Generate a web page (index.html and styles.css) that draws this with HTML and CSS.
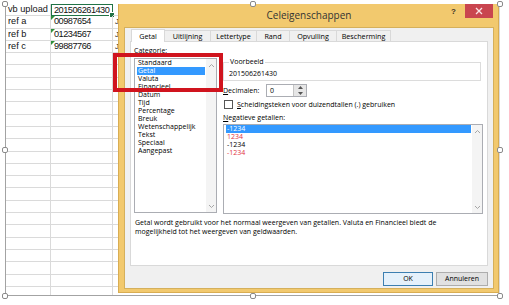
FILE: index.html
```html
<!DOCTYPE html>
<html lang="nl">
<head>
<meta charset="utf-8">
<title>Celeigenschappen</title>
<link rel="stylesheet" href="styles.css">
</head>
<body>
<div class="shot">
  <div class="sheet">
    <div class="c a">vb upload</div><div class="c b num sel">201506261430<span class="fill"></span></div><div class="c x"></div>
    <div class="c a">ref a</div><div class="c b num"><i class="tri"></i>00987654</div><div class="c x">J</div>
    <div class="c a">ref b</div><div class="c b num"><i class="tri"></i>01234567</div><div class="c x">J</div>
    <div class="c a">ref c</div><div class="c b num"><i class="tri"></i>99887766</div><div class="c x">J</div>
    <div class="c a"></div><div class="c b"></div><div class="c x"></div>
    <div class="c a"></div><div class="c b"></div><div class="c x"></div>
    <div class="c a"></div><div class="c b"></div><div class="c x"></div>
    <div class="c a"></div><div class="c b"></div><div class="c x"></div>
    <div class="c a"></div><div class="c b"></div><div class="c x"></div>
    <div class="c a"></div><div class="c b"></div><div class="c x"></div>
    <div class="c a"></div><div class="c b"></div><div class="c x"></div>
    <div class="c a"></div><div class="c b"></div><div class="c x"></div>
    <div class="c a"></div><div class="c b"></div><div class="c x"></div>
    <div class="c a"></div><div class="c b"></div><div class="c x"></div>
    <div class="c a"></div><div class="c b"></div><div class="c x"></div>
    <div class="c a"></div><div class="c b"></div><div class="c x"></div>
    <div class="c a"></div><div class="c b"></div><div class="c x"></div>
    <div class="c a"></div><div class="c b"></div><div class="c x"></div>
    <div class="c a"></div><div class="c b"></div><div class="c x"></div>
    <div class="c a"></div><div class="c b"></div><div class="c x"></div>
    <div class="c a"></div><div class="c b"></div><div class="c x"></div>
    <div class="c a"></div><div class="c b"></div><div class="c x"></div>
    <div class="c a"></div><div class="c b"></div><div class="c x"></div>
    <div class="c a"></div><div class="c b"></div><div class="c x"></div>
  </div>

  <div class="dlg">
    <div class="titlebar">
      <span></span>
      <span class="title">Celeigenschappen</span>
      <span class="ctrls">
        <span class="help">?</span>
        <span class="close"><svg width="8" height="8" viewBox="0 0 8 8"><path d="M1 1 L7 7 M7 1 L1 7" stroke="#fbe4e6" stroke-width="1.3"/></svg></span>
      </span>
    </div>
    <div class="body">
      <div class="tabs">
        <span class="tab on w34">Getal</span>
        <span class="tab w46">Uitlijning</span>
        <span class="tab w46">Lettertype</span>
        <span class="tab w33">Rand</span>
        <span class="tab w47">Opvulling</span>
        <span class="tab w54">Bescherming</span>
      </div>
      <div class="panel">
        <div class="cols">
          <div class="leftcol">
            <div class="lbl"><u>C</u>ategorie:</div>
            <div class="listbox cat">
              <div class="items">
                <div class="it">Standaard</div>
                <div class="it on">Getal</div>
                <div class="it">Valuta</div>
                <div class="it">Financieel</div>
                <div class="it">Datum</div>
                <div class="it">Tijd</div>
                <div class="it">Percentage</div>
                <div class="it">Breuk</div>
                <div class="it">Wetenschappelijk</div>
                <div class="it">Tekst</div>
                <div class="it">Speciaal</div>
                <div class="it">Aangepast</div>
              </div>
              <div class="sbar">
                <svg width="7" height="5" viewBox="0 0 7 5"><path d="M1 4 L3.5 1.5 L6 4" fill="none" stroke="#a6a6a6" stroke-width="1"/></svg>
                <svg width="7" height="5" viewBox="0 0 7 5"><path d="M1 1 L3.5 3.5 L6 1" fill="none" stroke="#a6a6a6" stroke-width="1"/></svg>
              </div>
            </div>
          </div>
          <div class="rightcol">
            <fieldset class="group">
              <legend>Voorbeeld</legend>
              <div class="sample">201506261430</div>
            </fieldset>
            <div class="decrow">
              <span class="lbl"><u>D</u>ecimalen:</span>
              <span class="spin">
                <span class="spinval">0</span>
                <span class="spinbtns">
                  <svg width="5" height="3" viewBox="0 0 5 3"><path d="M0 3 L2.5 0 L5 3Z" fill="#555"/></svg>
                  <svg width="5" height="3" viewBox="0 0 5 3"><path d="M0 0 L2.5 3 L5 0Z" fill="#555"/></svg>
                </span>
              </span>
            </div>
            <div class="chkrow">
              <span class="chk"></span>
              <span class="lbl"><u>S</u>cheidingsteken voor duizendtallen (.) gebruiken</span>
            </div>
            <div class="lbl neglbl"><u>N</u>egatieve getallen:</div>
            <div class="listbox neg">
              <div class="items">
                <div class="it on">-1234</div>
                <div class="it red">1234</div>
                <div class="it">-1234</div>
                <div class="it red">-1234</div>
              </div>
              <div class="sbar">
                <svg width="7" height="5" viewBox="0 0 7 5"><path d="M1 4 L3.5 1.5 L6 4" fill="none" stroke="#a6a6a6" stroke-width="1"/></svg>
                <svg width="7" height="5" viewBox="0 0 7 5"><path d="M1 1 L3.5 3.5 L6 1" fill="none" stroke="#a6a6a6" stroke-width="1"/></svg>
              </div>
            </div>
          </div>
        </div>
        <p class="desc">Getal wordt gebruikt voor het normaal weergeven van getallen. Valuta en Financieel biedt de mogelijkheid tot het weergeven van geldwaarden.</p>
      </div>
      <div class="footer">
        <span class="btn ok">OK</span>
        <span class="btn">Annuleren</span>
      </div>
    </div>
  </div>

  <div class="redbox"></div>
</div>

<span class="handle h1"></span>
<span class="handle h2"></span>
<span class="handle h3"></span>
<span class="handle h4"></span>
<span class="handle h5"></span>
<span class="handle h6"></span>
<span class="handle h7"></span>
<span class="handle h8"></span>
</body>
</html>
```

FILE: styles.css
```css
html, body {
  margin: 0;
  padding: 0;
}
body {
  width: 509px;
  height: 305px;
  background: #ffffff;
  position: relative;
  overflow: hidden;
  font-family: "Open Sans", "Noto Sans", sans-serif;
}

.shot {
  position: relative;
  margin: 4px 0 0 5px;
  width: 495px;
  height: 292px;
  box-sizing: border-box;
  border-left: 1px solid #a3a3a3;
  border-bottom: 1px solid #a3a3a3;
  overflow: hidden;
}

/* spreadsheet */
.sheet {
  display: grid;
  grid-template-columns: 45px 62px 1fr;
  grid-auto-rows: 12.3px;
  font-family: "Liberation Sans", Arial, sans-serif;
  font-size: 9.2px;
  color: #111;
}
.c {
  box-sizing: border-box;
  border-right: 1px solid #dadada;
  border-bottom: 1px solid #dadada;
  line-height: 11px;
  white-space: nowrap;
  overflow: hidden;
  position: relative;
}
.a { padding-left: 2px; }
.b { padding-left: 3px; }
.x { padding-left: 2px; font-size: 8px; }
.num { letter-spacing: -0.5px; }
.sel {
  border: 1px solid #217346;
  padding-left: 2px;
  overflow: visible;
}
.fill {
  position: absolute;
  right: -3px;
  bottom: -3px;
  width: 4px;
  height: 4px;
  background: #217346;
  border: 1px solid #fff;
}
.tri {
  position: absolute;
  left: 0;
  top: 0;
  width: 0;
  height: 0;
  border-top: 4px solid #2f8f3a;
  border-right: 4px solid transparent;
}

/* dialog */
.dlg {
  position: absolute;
  left: 112px;
  top: -1px;
  width: 381px;
  height: 290px;
  box-sizing: border-box;
  background: #f2c96e;
  border: 1px solid #d9ad52;
  padding: 0 4px 3px 5px;
  display: flex;
  flex-direction: column;
}
.titlebar {
  height: 23px;
  display: grid;
  grid-template-columns: 1fr auto 1fr;
  align-items: start;
}
.title {
  font-size: 10px;
  color: #333;
  line-height: 12px;
  margin-top: 5px;
}
.ctrls {
  justify-self: end;
  display: flex;
  align-items: flex-start;
}
.help {
  font-family: "Liberation Sans", Arial, sans-serif;
  font-weight: bold;
  font-size: 8px;
  color: #3b3325;
  line-height: 10px;
  margin-top: 3px;
  margin-right: 9px;
}
.close {
  width: 28px;
  height: 14px;
  background: #c9454f;
  display: flex;
  align-items: center;
  justify-content: center;
  margin-right: 1px;
}

.body {
  flex: 1;
  background: #f0f0f0;
  border: 1px solid #d5b05c;
  padding: 1px 5px 0 5px;
  display: flex;
  flex-direction: column;
  font-size: 7px;
  color: #000;
}
.tabs {
  display: flex;
  height: 12px;
  padding-left: 1px;
  align-items: flex-end;
}
.tab {
  box-sizing: border-box;
  height: 11px;
  border: 1px solid #d9d9d9;
  border-bottom: none;
  border-left: none;
  background: #f0f0f0;
  text-align: center;
  line-height: 10px;
  font-size: 7.2px;
}
.tab.on {
  background: #ffffff;
  border-left: 1px solid #d9d9d9;
  position: relative;
  z-index: 1;
  margin-bottom: -1px;
  height: 13px;
  line-height: 12px;
}
.w34 { width: 34px; }
.w46 { width: 46px; }
.w33 { width: 33px; }
.w47 { width: 47px; }
.w54 { width: 54px; }

.panel {
  height: 225px;
  box-sizing: border-box;
  background: #ffffff;
  border: 1px solid #d9d9d9;
  padding: 4px 4px 0 3px;
  display: flex;
  flex-direction: column;
}
.cols {
  display: grid;
  grid-template-columns: 83px 1fr;
  column-gap: 6px;
}
.lbl {
  font-size: 7px;
  line-height: 10px;
  white-space: nowrap;
}
.listbox {
  box-sizing: border-box;
  border: 1px solid #abadb3;
  background: #fff;
  display: flex;
}
.listbox .items {
  flex: 1;
  padding: 0 1px 0 2px;
}
.it {
  height: 8px;
  line-height: 8px;
  padding-left: 1px;
  font-size: 7px;
  white-space: nowrap;
}
.it.on {
  background: #3399ff;
  color: #fff;
}
.it.red { color: #e0333f; }
.sbar {
  width: 10px;
  background: #f4f4f4;
  display: flex;
  flex-direction: column;
  justify-content: space-between;
  align-items: center;
  padding: 4px 0 3px;
}
.cat {
  margin-top: 2px;
  height: 155px;
}
.rightcol {
  display: flex;
  flex-direction: column;
}
.group {
  margin: 11px 2px 0 0;
  padding: 0 5px 2px 5px;
  border: 1px solid #dcdcdc;
  height: 24px;
  box-sizing: border-box;
}
.group legend {
  font-size: 7px;
  line-height: 10px;
  padding: 0 1px;
}
.sample {
  font-size: 7px;
  line-height: 10px;
  margin-top: 2px;
}
.decrow {
  margin-top: 3px;
  display: flex;
  align-items: center;
  height: 13px;
}
.decrow .lbl { width: 43px; }
.spin {
  display: flex;
  height: 13px;
  box-sizing: border-box;
  border: 1px solid #abadb3;
  background: #fff;
}
.spinval {
  width: 26px;
  padding-left: 3px;
  box-sizing: border-box;
  line-height: 11px;
  font-size: 7px;
}
.spinbtns {
  width: 12px;
  background: #e6e6e6;
  border-left: 1px solid #c5c5c5;
  display: flex;
  flex-direction: column;
  justify-content: space-around;
  align-items: center;
}
.chkrow {
  margin-top: 3px;
  display: flex;
  align-items: center;
  height: 9px;
}
.chk {
  width: 9px;
  height: 9px;
  box-sizing: border-box;
  border: 1px solid #555;
  background: #fff;
  margin: 0 4px 0 1px;
}
.neglbl {
  margin-top: 4px;
}
.neg {
  margin-top: 1px;
  height: 90px;
}
.desc {
  margin: 4px 0 0 1px;
  font-size: 7px;
  line-height: 9px;
  width: 340px;
}

.footer {
  display: flex;
  justify-content: flex-end;
  gap: 3px;
  margin-top: 6px;
}
.btn {
  box-sizing: border-box;
  width: 52px;
  height: 14px;
  border: 1px solid #adadad;
  background: #e1e1e1;
  font-size: 7px;
  line-height: 12px;
  text-align: center;
}
.btn.ok {
  width: 50px;
  border-color: #3c7fb1;
  background: #e5f1fb;
}

.redbox {
  position: absolute;
  left: 107px;
  top: 49px;
  width: 110px;
  height: 39px;
  box-sizing: border-box;
  border: 4px solid #d0141e;
}

.handle {
  position: absolute;
  width: 6px;
  height: 6px;
  box-sizing: border-box;
  border: 1px solid #8a8a8a;
  background: #fff;
  border-radius: 2px;
}
.h1 { left: 2px; top: 1px; }
.h2 { left: 250px; top: 1px; }
.h3 { left: 497px; top: 1px; }
.h4 { left: 2px; top: 147px; }
.h5 { left: 497px; top: 147px; }
.h6 { left: 2px; top: 293px; }
.h7 { left: 250px; top: 293px; }
.h8 { left: 497px; top: 293px; }
```
